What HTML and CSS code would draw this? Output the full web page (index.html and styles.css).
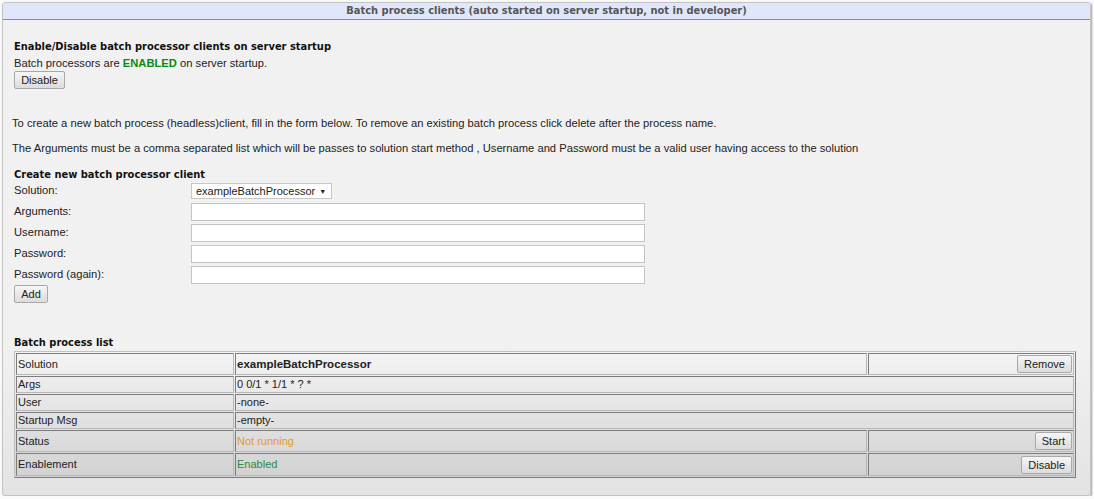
FILE: index.html
```html
<!DOCTYPE html>
<html>
<head>
<meta charset="utf-8">
<link rel="stylesheet" href="styles.css">
</head>
<body>
<div class="panel">
  <div class="panel-head">Batch process clients (auto started on server startup, not in developer)</div>
  <div class="panel-body">
    <div class="block">
      <div class="h">Enable/Disable batch processor clients on server startup</div>
      <div class="t">Batch processors are <span class="on">ENABLED</span> on server startup.</div>
      <button class="btn b-disable">Disable</button>
    </div>
    <p class="p1">To create a new batch process (headless)client, fill in the form below. To remove an existing batch process click delete after the process name.</p>
    <p class="p2">The Arguments must be a comma separated list which will be passes to solution start method , Username and Password must be a valid user having access to the solution</p>
    <div class="block">
      <div class="h h2">Create new batch processor client</div>
      <div class="form">
        <div class="lbl">Solution:</div>
        <div class="sel">exampleBatchProcessor <span class="arr">&#9660;</span></div>
        <div class="lbl">Arguments:</div>
        <div class="inp"></div>
        <div class="lbl">Username:</div>
        <div class="inp"></div>
        <div class="lbl">Password:</div>
        <div class="inp"></div>
        <div class="lbl">Password (again):</div>
        <div class="inp"></div>
      </div>
      <button class="btn b-add">Add</button>
      <div class="h h3">Batch process list</div>
      <table class="list">
        <tr class="r-tall r-first">
          <td class="c1">Solution</td>
          <td class="c2"><b>exampleBatchProcessor</b></td>
          <td class="c3"><button class="btn">Remove</button></td>
        </tr>
        <tr><td class="c1">Args</td><td colspan="2">0 0/1 * 1/1 * ? *</td></tr>
        <tr><td class="c1">User</td><td colspan="2">-none-</td></tr>
        <tr><td class="c1">Startup Msg</td><td colspan="2">-empty-</td></tr>
        <tr class="r-tall">
          <td class="c1">Status</td>
          <td class="c2"><span class="orange">Not running</span></td>
          <td class="c3"><button class="btn">Start</button></td>
        </tr>
        <tr class="r-tall r-last">
          <td class="c1">Enablement</td>
          <td class="c2"><span class="green">Enabled</span></td>
          <td class="c3"><button class="btn">Disable</button></td>
        </tr>
      </table>
    </div>
  </div>
</div>
</body>
</html>
```
FILE: styles.css
```css
html, body { margin: 0; padding: 0; background: #fafafa; }
body { padding: 2px 3px 0 2px; font-family: "Liberation Sans", Arial, sans-serif; font-size: 11.2px; color: #222; }
.panel {
  height: 494px;
  box-sizing: border-box;
  border: 1px solid #c4c4c4;
  border-radius: 3px;
  background: linear-gradient(#f1f1f1 0%, #f1f1f1 70%, #e3e3e3 100%);
  box-shadow: 1px 1px 2px rgba(0,0,0,0.35);
  overflow: hidden;
}
.panel-head {
  height: 16px;
  line-height: 16px;
  background: #e0e7fb;
  border-bottom: 1px solid #8c8c8c;
  text-align: center;
  font-family: "DejaVu Sans Condensed", "DejaVu Sans", Verdana, sans-serif;
  font-stretch: semi-condensed;
  font-weight: bold;
  font-size: 11px;
  color: #555;
}
.panel-body { padding: 0 13px 0 9px; }
.block { padding-left: 2px; }
.h {
  font-family: "DejaVu Sans Condensed", "DejaVu Sans", Verdana, sans-serif;
  font-stretch: semi-condensed;
  font-weight: bold;
  font-size: 11px;
  color: #111;
  margin-top: 20px;
  line-height: 14px;
}
.t { line-height: 16px; margin-top: 1px; }
.on { color: #0a8a14; font-weight: bold; }
.btn {
  font-family: "Liberation Sans", Arial, sans-serif;
  font-size: 11px;
  color: #222;
  height: 18px;
  padding: 0 6px;
  border: 1px solid #a8a8a8;
  border-radius: 2px;
  background: linear-gradient(#f6f6f6, #dcdcdc);
  line-height: 14px;
}
.b-disable { margin-top: 0; width: 51px; }
.p1 { margin: 27px 0 0 0; line-height: 14px; }
.p2 { margin: 11px 0 0 0; line-height: 14px; }
.h2 { margin-top: 13px; }
.form {
  display: grid;
  grid-template-columns: 177px 454px;
  grid-auto-rows: 21px;
  margin-top: -2px;
}
.lbl { line-height: 21px; }
.sel {
  justify-self: start;
  align-self: center;
  box-sizing: border-box;
  width: 141px;
  height: 16px;
  line-height: 14px;
  padding-left: 4px;
  border: 1px solid #c8c8c8;
  background: #fff;
  font-size: 11px;
  white-space: nowrap;
}
.arr { font-size: 7px; vertical-align: 1px; margin-left: 1px; }
.inp {
  align-self: center;
  box-sizing: border-box;
  height: 18px;
  border: 1px solid #c4c4c4;
  background: #fff;
}
.b-add { margin-top: 0; width: 34px; padding: 0; }
.h3 { margin-top: 33px; }
.list {
  margin-top: 1px;
  width: 1062px;
  border-collapse: separate;
  border-spacing: 1px;
  border: 1px solid;
  border-color: #c0c0c0 #7c7c7c #7c7c7c #c0c0c0;
  background: linear-gradient(#f4f4f4, #d2d2d2);
}
.list td {
  border: 1px solid;
  border-color: #7c7c7c #b8b8b8 #b8b8b8 #7c7c7c;
  padding: 0 1px;
  height: 15px;
  line-height: 15px;
  font-size: 11px;
}
.list .c1 { width: 214px; }
.list .c2 { width: 628px; }
.list .c3 { text-align: right; padding: 1px 1px 1px 0; }
.list tr.r-tall td { height: 20px; }
.list tr.r-tall td.c3 { height: 18px; }
.list tr.r-last td { height: 21px; }
.list tr.r-last td.c3 { height: 19px; }
.list b { font-weight: bold; font-size: 11.5px; }
.orange { color: #e39a30; }
.green { color: #2b8a3e; }
```
